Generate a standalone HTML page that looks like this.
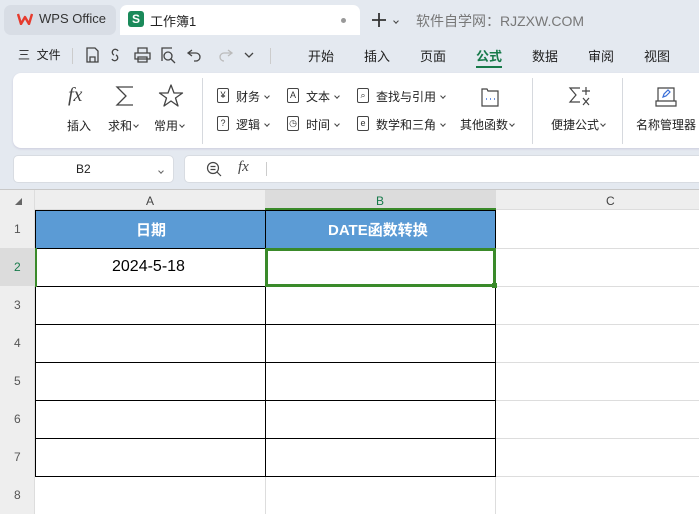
<!DOCTYPE html><html><head><meta charset="utf-8"><style>
*{margin:0;padding:0;box-sizing:border-box}
body{width:699px;height:514px;overflow:hidden;background:#e4e9f0;font-family:"Liberation Sans","Noto Sans CJK SC",sans-serif;position:relative;color:#222}
.a{position:absolute;white-space:nowrap}
.t{font-size:13px}
.s{font-size:12px}
.ic{position:absolute;border:1.2px solid #444;border-radius:2px;width:12px;height:15px;font-size:9px;line-height:13px;text-align:center;color:#333}
.v{position:absolute;width:1px;background:#d6d9de}
.cv{display:inline-block;width:4px;height:4px;border-right:1.2px solid #444;border-bottom:1.2px solid #444;transform:rotate(45deg);margin-left:5px;vertical-align:3px}
</style></head><body>
<!-- tabs -->
<div class="a" style="left:4px;top:5px;width:112px;height:30px;background:#d8dde5;border-radius:7px"></div>
<svg class="a" style="left:17px;top:13px" width="16" height="12" viewBox="0 0 16 12"><path d="M1 1 L4 11 L8 4 L12 11 L15 1" fill="none" stroke="#e63b2e" stroke-width="2.4" stroke-linejoin="round"/></svg>
<div class="a t" style="left:39px;top:11px;color:#333">WPS Office</div>
<div class="a" style="left:120px;top:5px;width:240px;height:30px;background:#fff;border-radius:7px 7px 0 0"></div>
<div class="a" style="left:128px;top:11px;width:16px;height:16px;background:#1a8a5a;border-radius:3px;color:#fff;font-size:12px;font-weight:bold;text-align:center;line-height:16px">S</div>
<div class="a t" style="left:150px;top:11px">工作簿1</div>
<div class="a" style="left:341px;top:18px;width:5px;height:5px;background:#999;border-radius:50%"></div>
<svg class="a" style="left:371px;top:12px" width="16" height="16"><path d="M8 1V15M1 8H15" stroke="#333" stroke-width="1.8"/></svg>
<div class="a" style="left:394px;top:13px"><span class="cv" style="margin:0"></span></div>
<div class="a" style="left:416px;top:11px;font-size:14px;color:#777">软件自学网：RJZXW.COM</div>
<!-- menu row -->
<div class="a s" style="left:18px;top:46px">三&nbsp; 文件</div>
<div class="v" style="left:72px;top:48px;height:16px;background:#ccc"></div>
<svg class="a" style="left:84px;top:45px" width="180" height="20" fill="none" stroke="#444" stroke-width="1.3">
<path d="M3 3H11L14 6V17H3Z M6 17V12H11V17"/>
<path d="M30 10a3 3 0 1 1 4 -4 M28 14a3 3 0 1 0 4 -4"/>
<path d="M54 8V3H63V8 M51 8H66V14H51Z M54 12H63V17H54Z"/>
<path d="M78 16V3H88 M84 11m-4 0a4 4 0 1 0 8 0a4 4 0 1 0 -8 0 M87 14L91 18"/>
<path d="M108 5L104 8L108 11 M104 8H112a4 4 0 0 1 0 8H110"/>
<path d="M144 5L148 8L144 11 M148 8H140a4 4 0 0 0 0 8" stroke="#bbb"/>
<path d="M161 8L165 12L169 8"/>
</svg>
<div class="v" style="left:270px;top:48px;height:16px;background:#ccc"></div>
<div class="a t" style="left:308px;top:46px">开始</div>
<div class="a t" style="left:364px;top:46px">插入</div>
<div class="a t" style="left:420px;top:46px">页面</div>
<div class="a t" style="left:476px;top:46px;color:#177a4a;font-weight:bold">公式</div>
<div class="a" style="left:476px;top:66px;width:26px;height:2px;background:#177a4a"></div>
<div class="a t" style="left:532px;top:46px">数据</div>
<div class="a t" style="left:588px;top:46px">审阅</div>
<div class="a t" style="left:644px;top:46px">视图</div>
<!-- ribbon -->
<div class="a" style="left:13px;top:73px;width:700px;height:75px;background:#fff;border-radius:8px;box-shadow:0 1px 2px #ccd"></div>
<div class="a" style="left:68px;top:84px;font-family:'Liberation Serif',serif;font-style:italic;font-size:20px;color:#444">fx</div>
<svg class="a" style="left:114px;top:85px" width="22" height="22" fill="none" stroke="#444" stroke-width="1.3"><path d="M19 2H3L12 11L3 20H19"/></svg>
<svg class="a" style="left:158px;top:84px" width="26" height="24" fill="none" stroke="#444" stroke-width="1.3" stroke-linejoin="round"><path d="M13 1L16 9L24.5 9L17.5 14L20 22L13 17L6 22L8.5 14L1.5 9L10 9Z"/></svg>
<div class="a s" style="left:67px;top:117px">插入</div>
<div class="a s" style="left:108px;top:117px">求和<span class="cv" style="margin-left:2px"></span></div>
<div class="a s" style="left:154px;top:117px">常用<span class="cv" style="margin-left:2px"></span></div>
<div class="v" style="left:202px;top:78px;height:66px"></div>
<div class="ic" style="left:217px;top:88px">¥</div><div class="a s" style="left:236px;top:88px">财务<span class="cv"></span></div>
<div class="ic" style="left:287px;top:88px">A</div><div class="a s" style="left:306px;top:88px">文本<span class="cv"></span></div>
<div class="ic" style="left:357px;top:88px">⌕</div><div class="a s" style="left:376px;top:88px">查找与引用<span class="cv"></span></div>
<div class="ic" style="left:217px;top:116px">?</div><div class="a s" style="left:236px;top:116px">逻辑<span class="cv"></span></div>
<div class="ic" style="left:287px;top:116px">◷</div><div class="a s" style="left:306px;top:116px">时间<span class="cv"></span></div>
<div class="ic" style="left:357px;top:116px">e</div><div class="a s" style="left:376px;top:116px">数学和三角<span class="cv"></span></div>
<svg class="a" style="left:480px;top:86px" width="20" height="22" fill="none" stroke="#444" stroke-width="1.2"><path d="M2 3H7L8 5H18V20H2Z"/><path d="M6 13H7M10 13H11M14 13H15" stroke="#3a6fd8" stroke-width="1.6"/></svg>
<div class="a s" style="left:460px;top:116px">其他函数<span class="cv" style="margin-left:2px"></span></div>
<div class="v" style="left:532px;top:78px;height:66px"></div>
<svg class="a" style="left:568px;top:86px" width="26" height="22" fill="none" stroke="#444" stroke-width="1.2"><path d="M12 2H2L8 9L2 16H12 M18 1V9M14 5H22 M15 12L21 19M21 12L15 19"/></svg>
<div class="a s" style="left:551px;top:116px">便捷公式<span class="cv" style="margin-left:2px"></span></div>
<div class="v" style="left:622px;top:78px;height:66px"></div>
<svg class="a" style="left:655px;top:86px" width="22" height="22" fill="none" stroke="#444" stroke-width="1.2"><path d="M3 2H19V15H3Z M1 15H21V20H1Z"/><path d="M8 11L9 8L13 4L15 6L11 10Z" stroke="#3a6fd8"/></svg>
<div class="a s" style="left:636px;top:116px">名称管理器</div>
<!-- formula bar -->
<div class="a" style="left:13px;top:155px;width:161px;height:28px;background:#fff;border:1px solid #d8dce2;border-radius:5px"></div>
<div class="a s" style="left:76px;top:162px">B2</div>
<div class="a" style="left:159px;top:163px"><span class="cv" style="margin:0;border-color:#666"></span></div>
<div class="a" style="left:184px;top:155px;width:520px;height:28px;background:#fff;border:1px solid #d8dce2;border-radius:5px"></div>
<svg class="a" style="left:206px;top:161px" width="16" height="16" fill="none" stroke="#444" stroke-width="1.2"><circle cx="7" cy="7" r="5.5"/><path d="M4.5 5.5H9.5M4.5 8.5H9.5M11 11L15 15"/></svg>
<div class="a" style="left:238px;top:159px;font-family:'Liberation Serif',serif;font-style:italic;font-size:15px;color:#444">fx</div>
<div class="v" style="left:266px;top:162px;height:14px;background:#ccc"></div>
<!-- grid -->
<div class="a" style="left:0;top:189px;width:699px;height:325px;background:#fff;border-top:1px solid #c8c8c8"></div>
<div class="a" style="left:0;top:190px;width:699px;height:20px;background:#eeeeee;border-bottom:1px solid #ddd"></div>
<div class="a" style="left:265px;top:190px;width:231px;height:20px;background:#dcdcdc"></div>
<div class="a" style="left:0;top:190px;width:35px;height:324px;background:#eeeeee;border-right:1px solid #ddd"></div>
<div class="a" style="left:0;top:248px;width:35px;height:38px;background:#dcdcdc"></div>
<div class="a" style="left:15px;top:197px;font-size:7px;color:#666">◢</div>
<div class="a s" style="left:146px;top:194px;color:#444">A</div>
<div class="a s" style="left:376px;top:194px;color:#177a4a">B</div>
<div class="a s" style="left:606px;top:194px;color:#444">C</div>
<div class="a" style="left:35px;top:248px;width:664px;height:1px;background:#ddd"></div>
<div class="a" style="left:35px;top:286px;width:664px;height:1px;background:#ddd"></div>
<div class="a" style="left:35px;top:324px;width:664px;height:1px;background:#ddd"></div>
<div class="a" style="left:35px;top:362px;width:664px;height:1px;background:#ddd"></div>
<div class="a" style="left:35px;top:400px;width:664px;height:1px;background:#ddd"></div>
<div class="a" style="left:35px;top:438px;width:664px;height:1px;background:#ddd"></div>
<div class="a" style="left:35px;top:476px;width:664px;height:1px;background:#ddd"></div>
<div class="a" style="left:265px;top:476px;width:1px;height:38px;background:#ddd"></div>
<div class="a" style="left:495px;top:476px;width:1px;height:38px;background:#ddd"></div>
<!-- table -->
<div class="a" style="left:35px;top:210px;width:461px;height:38px;background:#5b9bd5"></div>
<div class="a" style="left:35px;top:210px;width:461px;height:267px;border:1px solid #000"></div>
<div class="a" style="left:265px;top:210px;width:1px;height:267px;background:#000"></div>
<div class="a" style="left:35px;top:248px;width:461px;height:1px;background:#000"></div>
<div class="a" style="left:35px;top:286px;width:461px;height:1px;background:#000"></div>
<div class="a" style="left:35px;top:324px;width:461px;height:1px;background:#000"></div>
<div class="a" style="left:35px;top:362px;width:461px;height:1px;background:#000"></div>
<div class="a" style="left:35px;top:400px;width:461px;height:1px;background:#000"></div>
<div class="a" style="left:35px;top:438px;width:461px;height:1px;background:#000"></div>
<div class="a" style="left:35px;top:248px;width:2px;height:39px;background:#3a8a2a"></div>
<div class="a" style="left:265px;top:208px;width:231px;height:2px;background:#3a8a2a"></div>
<div class="a" style="left:265px;top:248px;width:231px;height:39px;border:3px solid #3a8a2a"></div>
<div class="a" style="left:492px;top:283px;width:5px;height:5px;background:#3a8a2a"></div>
<div class="a" style="left:136px;top:219px;font-size:15px;font-weight:bold;color:#fff">日期</div>
<div class="a" style="left:328px;top:219px;font-size:15px;font-weight:bold;color:#fff">DATE函数转换</div>
<div class="a" style="left:112px;top:258px;font-size:16px;color:#000">2024-5-18</div>
<div class="a s" style="left:14px;top:222px;color:#555">1</div>
<div class="a s" style="left:14px;top:260px;color:#177a4a">2</div>
<div class="a s" style="left:14px;top:298px;color:#555">3</div>
<div class="a s" style="left:14px;top:336px;color:#555">4</div>
<div class="a s" style="left:14px;top:374px;color:#555">5</div>
<div class="a s" style="left:14px;top:412px;color:#555">6</div>
<div class="a s" style="left:14px;top:450px;color:#555">7</div>
<div class="a s" style="left:14px;top:488px;color:#555">8</div>
</body></html>
